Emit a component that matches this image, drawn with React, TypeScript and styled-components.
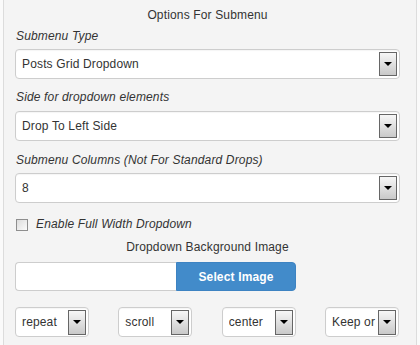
import styled, {createGlobalStyle} from "styled-components";

const GlobalStyle = createGlobalStyle`
  html, body {
    margin: 0;
    padding: 0;
    background: #fafafa;
  }

  body {
    font-family: "Liberation Sans", Arial, sans-serif;
    font-size: 12px;
    letter-spacing: 0.15px;
    color: #333;
  }
`;

const Panel = styled.div`
  box-sizing: border-box;
  width: 414px;
  height: 345px;
  margin-left: 3px;
  padding: 0 16px 0 11px;
  background: #f4f4f4;
  border-left: 1px solid #dcdcdc;
  border-right: 1px solid #dcdcdc;
  display: flex;
  flex-direction: column;
`;

const Heading = styled.div<{ $top: number }>`
  margin-top: ${p => p.$top}px;
  line-height: 16px;
  text-align: center;
  font-size: 12px;
  color: #333;
`;

const Label = styled.div<{ $top: number; $bottom: number }>`
  margin: ${p => p.$top}px 0 ${p => p.$bottom}px 1px;
  line-height: 16px;
  font-style: italic;
  font-size: 12px;
  color: #333;
`;

const SelectBox = styled.div<{ $width?: number }>`
  box-sizing: border-box;
  display: flex;
  align-items: center;
  height: 30px;
  width: ${p => (p.$width ? `${p.$width}px` : "100%")};
  padding: 0 2px 0 6px;
  background: #fff;
  border: 1px solid #cdcdcd;
  border-radius: 4px;
  box-shadow: inset 0 1px 1px rgba(0, 0, 0, 0.04);
`;

const SelectValue = styled.span`
  flex: 1;
  min-width: 0;
  margin-right: 1px;
  overflow: hidden;
  white-space: nowrap;
  font-size: 12px;
  color: #333;
`;

const ArrowBox = styled.span<{ $height: number }>`
  box-sizing: border-box;
  flex-shrink: 0;
  display: flex;
  justify-content: center;
  align-items: center;
  width: 18px;
  height: ${p => p.$height}px;
  border: 1px solid #666;
  background: linear-gradient(#f7f7f7, #c9c9c9);

  &::after {
    content: "";
    margin-top: -1px;
    border-left: 4px solid transparent;
    border-right: 4px solid transparent;
    border-top: 4px solid #000;
  }
`;

const CheckRow = styled.label`
  display: flex;
  align-items: center;
  height: 16px;
  margin-top: 13px;
  padding-left: 1px;
  font-style: italic;
  font-size: 12px;
  color: #333;
`;

const CheckBox = styled.span`
  box-sizing: border-box;
  width: 12px;
  height: 12px;
  margin: 2px 8px 0 0;
  border: 1px solid #8e8e8e;
  background: linear-gradient(135deg, #dcdcdc, #fbfbfb);
`;

const UploadRow = styled.div`
  display: flex;
  height: 29px;
  margin-top: 7px;
`;

const PathInput = styled.div`
  box-sizing: border-box;
  width: 161px;
  background: #fff;
  border: 1px solid #cdcdcd;
  border-right: none;
  border-radius: 4px 0 0 4px;
`;

const SelectButton = styled.div`
  box-sizing: border-box;
  width: 120px;
  display: flex;
  align-items: center;
  justify-content: center;
  background: #428bca;
  border: 1px solid #3d83c2;
  border-radius: 0 4px 4px 0;
  color: #fff;
  font-weight: bold;
  font-size: 12px;
`;

const OptionsRow = styled.div`
  display: flex;
  justify-content: space-between;
  margin-top: 16px;
  padding-right: 1px;
`;

interface SelectProps {
  value: string
  width?: number
  arrowHeight?: number
}

const Select = ({value, width, arrowHeight = 24}: SelectProps) => (
  <SelectBox $width={width}>
    <SelectValue>{value}</SelectValue>
    <ArrowBox $height={arrowHeight} />
  </SelectBox>
);

export default function App() {
  return (
    <>
      <GlobalStyle />
      <Panel>
        <Heading $top={7}>Options For Submenu</Heading>
        <Label $top={5} $bottom={5}>Submenu Type</Label>
        <Select value="Posts Grid Dropdown" />
        <Label $top={10} $bottom={6}>Side for dropdown elements</Label>
        <Select value="Drop To Left Side" />
        <Label $top={11} $bottom={5}>Submenu Columns (Not For Standard Drops)</Label>
        <Select value="8" />
        <CheckRow>
          <CheckBox />
          Enable Full Width Dropdown
        </CheckRow>
        <Heading $top={7}>Dropdown Background Image</Heading>
        <UploadRow>
          <PathInput />
          <SelectButton>Select Image</SelectButton>
        </UploadRow>
        <OptionsRow>
          <Select value="repeat" width={74} arrowHeight={25} />
          <Select value="scroll" width={74} arrowHeight={25} />
          <Select value="center" width={74} arrowHeight={25} />
          <Select value="Keep or" width={74} arrowHeight={25} />
        </OptionsRow>
      </Panel>
    </>
  );
}
